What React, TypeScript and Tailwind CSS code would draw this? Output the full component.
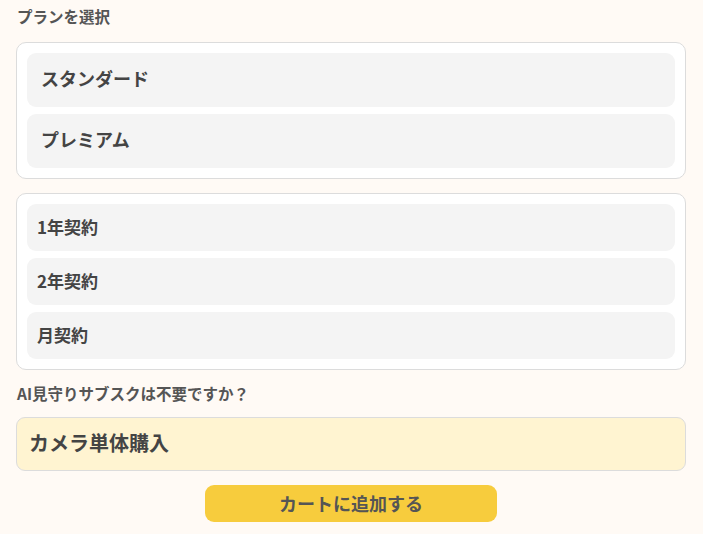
import React from "react";

export default function App() {
  const font = { fontFamily: '"Noto Sans CJK JP", "Noto Sans", sans-serif' };
  return (
    <div className="w-[703px] h-[534px] bg-[#fffaf5] pl-4 pr-[17px] pt-[5px] text-[#444]" style={font}>
      <div className="text-[15.5px] font-bold text-[#555] leading-[22px] pl-[1px]">プランを選択</div>
      <div className="mt-[15px] rounded-[10px] border border-[#dcdcdc] bg-white p-[10px] flex flex-col gap-[7px]">
        {["スタンダード", "プレミアム"].map((t) => (
          <div key={t} className="h-[54px] rounded-[9px] bg-[#f4f4f4] flex items-center px-[14px] pb-[3px] text-[18px] font-bold text-[#444]">
            {t}
          </div>
        ))}
      </div>
      <div className="mt-[14px] rounded-[10px] border border-[#dcdcdc] bg-white p-[10px] flex flex-col gap-[7px]">
        {["1年契約", "2年契約", "月契約"].map((t) => (
          <div key={t} className="h-[47px] rounded-[9px] bg-[#f4f4f4] flex items-center px-[10px] pb-[2px] text-[17px] font-bold text-[#444]">
            {t}
          </div>
        ))}
      </div>
      <div className="mt-[12px] text-[15.5px] font-bold text-[#555] leading-[22px] pl-[1px]">AI見守りサブスクは不要ですか？</div>
      <div className="mt-[13px] h-[54px] rounded-[9px] border border-[#dcdcdc] bg-[#fff4d1] flex items-center px-[12px] pb-[2px] text-[20px] font-bold text-[#444]">
        カメラ単体購入
      </div>
      <div className="mt-[14px] flex justify-center">
        <div className="w-[292px] h-[37px] rounded-[9px] bg-[#f7cc3d] flex items-center justify-center pb-[1px] text-[18px] font-bold text-[#555]">
          カートに追加する
        </div>
      </div>
    </div>
  );
}
